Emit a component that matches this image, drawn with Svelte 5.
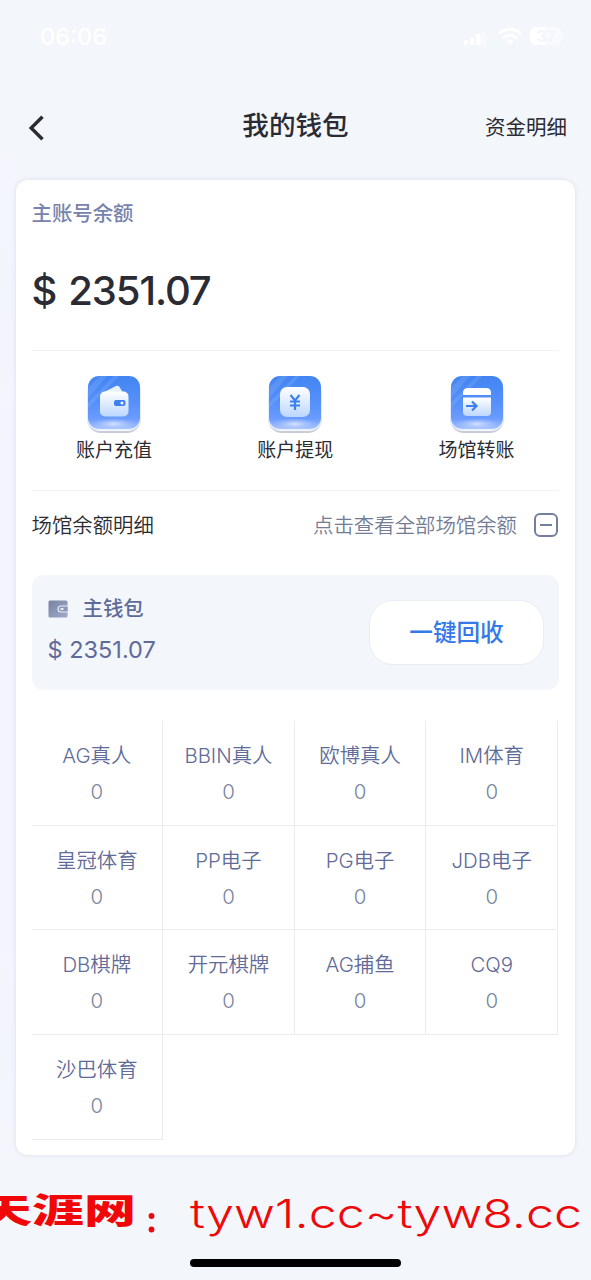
<script lang="ts">
  const balance = '2351.07';

  const actions = [
    { icon: 'wallet', label: '账户充值' },
    { icon: 'yen', label: '账户提现' },
    { icon: 'transfer', label: '场馆转账' },
  ];

  const venues = [
    'AG真人', 'BBIN真人', '欧博真人', 'IM体育',
    '皇冠体育', 'PP电子', 'PG电子', 'JDB电子',
    'DB棋牌', '开元棋牌', 'AG捕鱼', 'CQ9',
    '沙巴体育',
  ].map((name) => ({ name, amount: 0 }));

  let open = $state(true);
</script>

<div class="page">
  <div class="status">
    <span class="time">06:06</span>
    <svg width="102" height="22" viewBox="0 0 102 22" fill="#fff">
      <rect x="0" y="15" width="4" height="5" rx="1" />
      <rect x="6" y="12.500" width="4" height="7.500" rx="1" />
      <rect x="12" y="9" width="4.500" height="11" rx="1" />
      <rect x="18" y="6" width="4" height="14" rx="1" opacity=".4" />
      <g fill="none" stroke="#fff" stroke-width="3">
        <path d="M35 8.500q11-8.500 22 0" />
        <path d="M39 13q7-5.500 14 0" />
      </g>
      <path d="M42.500 16q3.500-3 7 0L46 19.500z" />
      <rect x="66" y="2" width="32" height="18" rx="6" opacity=".45" />
      <path d="M72 2h9v18h-9a6 6 0 0 1-6-6V8a6 6 0 0 1 6-6z" />
      <path d="M99 8q3 3 0 6z" opacity=".5" />
      <text x="82" y="16.500" class="battery">37</text>
    </svg>
  </div>

  <header class="nav">
    <button class="back" aria-label="返回">
      <svg width="20" height="28" viewBox="0 0 20 28" fill="none" stroke="#2b2b33" stroke-width="3.400">
        <path d="M18.500 2.800 7.200 14l11.300 11.200" />
      </svg>
    </button>
    <h1>我的钱包</h1>
    <button class="detail">资金明细</button>
  </header>

  <main class="card">
    <div class="label">主账号余额</div>
    <div class="balance">$ {balance}</div>

    <div class="actions">
      {#each actions as action}
        <button class="action">
          <svg width="62" height="64" viewBox="0 0 62 64">
            <defs>
              <linearGradient id="tile-{action.icon}" x1="0" y1="0" x2="0" y2="1">
                <stop offset="0" stop-color="#4285f2" />
                <stop offset=".5" stop-color="#5690fa" />
                <stop offset=".8" stop-color="#6a9bff" />
                <stop offset="1" stop-color="#a9c4ff" />
              </linearGradient>
              <linearGradient id="glyph-{action.icon}" x1="0" y1="0" x2="0" y2="1">
                <stop offset="0" stop-color="#fff" />
                <stop offset="1" stop-color="#bdd7ff" />
              </linearGradient>
              <linearGradient id="rim-{action.icon}" x1="0" y1="0" x2="0" y2="1">
                <stop offset="0.8" stop-color="#dbe6fc" />
                <stop offset="1" stop-color="#c6cad6" />
              </linearGradient>
              <radialGradient id="glow-{action.icon}">
                <stop offset="0" stop-color="#e0e9ff" stop-opacity=".9" />
                <stop offset="1" stop-color="#a9c4ff" stop-opacity="0" />
              </radialGradient>
            </defs>
            <rect x="4" y="8" width="54" height="54" rx="14" fill="url(#rim-{action.icon})" />
            <rect x="4.500" y="8" width="53" height="52" rx="13" fill="#f0f4fd" />
            <rect x="5" y="5" width="52" height="53" rx="11" fill="url(#tile-{action.icon})" />
            <path d="M5 27V17L17 5h7zM5 37v-5L31 5h5z" fill="#fff" opacity=".1" />
            <ellipse cx="31" cy="53" rx="22" ry="6" fill="url(#glow-{action.icon})" />
            {#if action.icon === 'wallet'}
              <path d="m21 21 12-6q2.500-.8 3.500 1l3 5z" fill="#e7f0ff" />
              <rect x="17" y="20.500" width="28.500" height="25" rx="5" fill="url(#glyph-wallet)" />
              <rect x="31" y="29" width="11.500" height="6" rx="2" fill="#3d7ff0" />
              <circle cx="39" cy="32" r="1.500" fill="#fff" />
            {:else if action.icon === 'yen'}
              <rect x="16" y="16" width="30" height="30" rx="7" fill="url(#glyph-yen)" />
              <path d="m26.500 24 4.500 5.500 4.500-5.500M31 29v10M26 30.500h10M26 34.500h10" fill="none" stroke="#3d80f2" stroke-width="2.200" />
            {:else}
              <path d="M17 24v-2q0-5 5-5h18q5 0 5 5v2z" fill="#fff" />
              <path d="M17 26.500h28V41q0 4-4 4H21q-4 0-4-4z" fill="url(#glyph-transfer)" />
              <path d="M20 35h10m-4-4.500 4.500 4.500-4.500 4.500" fill="none" stroke="#3d7fee" stroke-width="2.200" />
            {/if}
          </svg>
          <span>{action.label}</span>
        </button>
      {/each}
    </div>

    <div class="venue-head">
      <span>场馆余额明细</span>
      <button class="toggle" onclick={() => (open = !open)}>
        点击查看全部场馆余额
        <svg width="26" height="28" viewBox="0 0 26 28" fill="none" stroke="#747f9f" stroke-width="2">
          <rect x="2" y="4" width="22" height="22" rx="5" />
          <path d="M7 15h12" />
          {#if !open}<path d="M13 9v12" />{/if}
        </svg>
      </button>
    </div>

    <section class="main-wallet">
      <div class="wallet-info">
        <div class="wallet-name">
          <svg width="20" height="18" viewBox="0 0 20 18">
            <defs>
              <linearGradient id="purse" x1="0" y1="0" x2="1" y2="1">
                <stop offset="0" stop-color="#7883a2" />
                <stop offset="1" stop-color="#a0a9c8" />
              </linearGradient>
            </defs>
            <rect x=".5" y=".5" width="19" height="17" rx="1.500" fill="url(#purse)" />
            <path d="M19.500 6H13a3 3 0 0 0 0 6h6.500" fill="#8d97b8" stroke="#e8edf7" stroke-width="1.100" />
            <path d="M12.500 9h3" stroke="#fff" stroke-width="1.600" />
          </svg>
          <span>主钱包</span>
        </div>
        <div class="wallet-amount">$ {balance}</div>
      </div>
      <button class="recall">一键回收</button>
    </section>

    {#if open}
      <div class="venues">
        {#each venues as venue}
          <div class="venue">
            <span>{venue.name}</span>
            <span class="amount">{venue.amount}</span>
          </div>
        {/each}
      </div>
    {/if}
  </main>

  <footer>
    <svg class="site" width="591" height="60" viewBox="0 0 591 60">
      <text x="-20" y="39" class="site-name" textLength="156" lengthAdjust="spacingAndGlyphs">天涯网</text>
      <circle cx="151.500" cy="32" r="2.900" />
      <circle cx="151.500" cy="45.500" r="2.900" />
      <text x="190" y="43.500" class="site-url" textLength="392" lengthAdjust="spacingAndGlyphs">tyw1.cc~tyw8.cc</text>
    </svg>
    <div class="home-bar"></div>
  </footer>
</div>

<style>
  :global(body) {
    background: #f3f6fb;
  }
  .page {
    width: 591px;
    height: 1280px;
    overflow: hidden;
    box-sizing: border-box;
    display: flex;
    flex-direction: column;
    background: linear-gradient(180deg, #f3f6fb 10%, #f3f4ff 35%, #f3f4ff 72%, #f3f6fb 92%) 0 0 / 16px 100% no-repeat #f3f6fb;
    color: #2b2b33;
    font-family: Inter, 'Noto Sans CJK SC', sans-serif;
  }
  button {
    padding: 0;
    border: 0;
    background: none;
    color: inherit;
    font: inherit;
    cursor: pointer;
  }
  svg {
    display: block;
    flex: none;
  }
  .status {
    height: 72px;
    box-sizing: border-box;
    padding: 0 25px 0 40px;
    display: flex;
    align-items: center;
    justify-content: space-between;
    color: #fff;
  }
  .time {
    font-size: 23.5px;
    font-weight: 500;
  }
  .battery {
    fill: #f3f6fb;
    font-size: 16px;
    font-weight: 700;
    text-anchor: middle;
  }
  .nav {
    height: 108px;
    box-sizing: border-box;
    padding: 0 24px;
    display: grid;
    grid-template-columns: 1fr auto 1fr;
    align-items: center;
  }
  .back {
    justify-self: start;
    padding-top: 4px;
  }
  h1 {
    margin: 0;
    padding-bottom: 2px;
    font-size: 26.6px;
    font-weight: 500;
    line-height: 40px;
  }
  .detail {
    justify-self: end;
    padding-top: 4px;
    font-size: 20.5px;
    line-height: 30px;
  }
  .card {
    width: 559px;
    height: 975px;
    flex: none;
    box-sizing: border-box;
    margin: 0 auto;
    padding: 18px 16px 0 15.5px;
    border-radius: 12px;
    background: #fff;
    box-shadow: 0 0 5px rgba(70, 80, 130, 0.13);
  }
  .label {
    color: #7883ad;
    font-size: 20.4px;
    font-weight: 500;
    line-height: 32px;
  }
  .balance {
    height: 120px;
    font-size: 40px;
    font-weight: 500;
    letter-spacing: -1.1px;
    line-height: 121px;
    word-spacing: 2.5px;
  }
  .actions {
    height: 141px;
    box-sizing: border-box;
    padding-top: 20px;
    border-top: 1.5px solid #f1f2f5;
    border-bottom: 1.5px solid #f1f2f5;
    display: flex;
    justify-content: space-between;
  }
  .action {
    width: 165px;
    display: flex;
    flex-direction: column;
    align-items: center;
    font-size: 19px;
    line-height: 28px;
  }
  .action span {
    margin-top: 2px;
  }
  .venue-head {
    height: 66px;
    display: flex;
    align-items: center;
    justify-content: space-between;
    font-size: 20.4px;
    font-weight: 350;
  }
  .toggle {
    display: flex;
    align-items: center;
    gap: 16px;
    color: #747c95;
  }
  .main-wallet {
    height: 115px;
    box-sizing: border-box;
    margin: 18px 0 31px;
    padding: 0 15px 0 16px;
    display: flex;
    align-items: center;
    justify-content: space-between;
    border-radius: 12px;
    background: #f3f6fb;
    color: #5f6b9a;
  }
  .wallet-info {
    padding-bottom: 5px;
  }
  .wallet-name {
    display: flex;
    align-items: center;
    gap: 15px;
    font-size: 20.4px;
    font-weight: 500;
    line-height: 40px;
  }
  .wallet-amount {
    font-size: 23.5px;
    line-height: 42px;
  }
  .recall {
    width: 175px;
    height: 65px;
    padding-bottom: 3px;
    border: 1px solid #e9edf4;
    border-radius: 24px;
    background: #fff;
    color: #3579e8;
    font-size: 23.6px;
    font-weight: 500;
  }
  .venues {
    width: 526.5px;
    display: grid;
    grid-template-columns: repeat(4, 1fr);
    grid-auto-rows: 104.7px;
  }
  .venue {
    padding-top: 2px;
    display: flex;
    flex-direction: column;
    align-items: center;
    justify-content: center;
    border-right: 1px solid #ebecef;
    border-bottom: 1px solid #ebecef;
    color: #5f6b99;
    font-size: 20.4px;
    font-weight: 350;
    line-height: 36px;
  }
  .amount {
    color: #7b84a2;
  }
  footer {
    flex: 1;
    padding-top: 29px;
    display: flex;
    flex-direction: column;
    align-items: center;
  }
  .site {
    fill: #f00808;
  }
  .site-name {
    font-family: 'Noto Sans CJK SC', sans-serif;
    font-size: 34px;
    font-weight: 900;
  }
  .site-url {
    font-size: 40px;
    font-weight: 300;
  }
  .home-bar {
    width: 211px;
    height: 8px;
    margin-top: 15px;
    border-radius: 4px;
    background: #000;
  }
</style>
